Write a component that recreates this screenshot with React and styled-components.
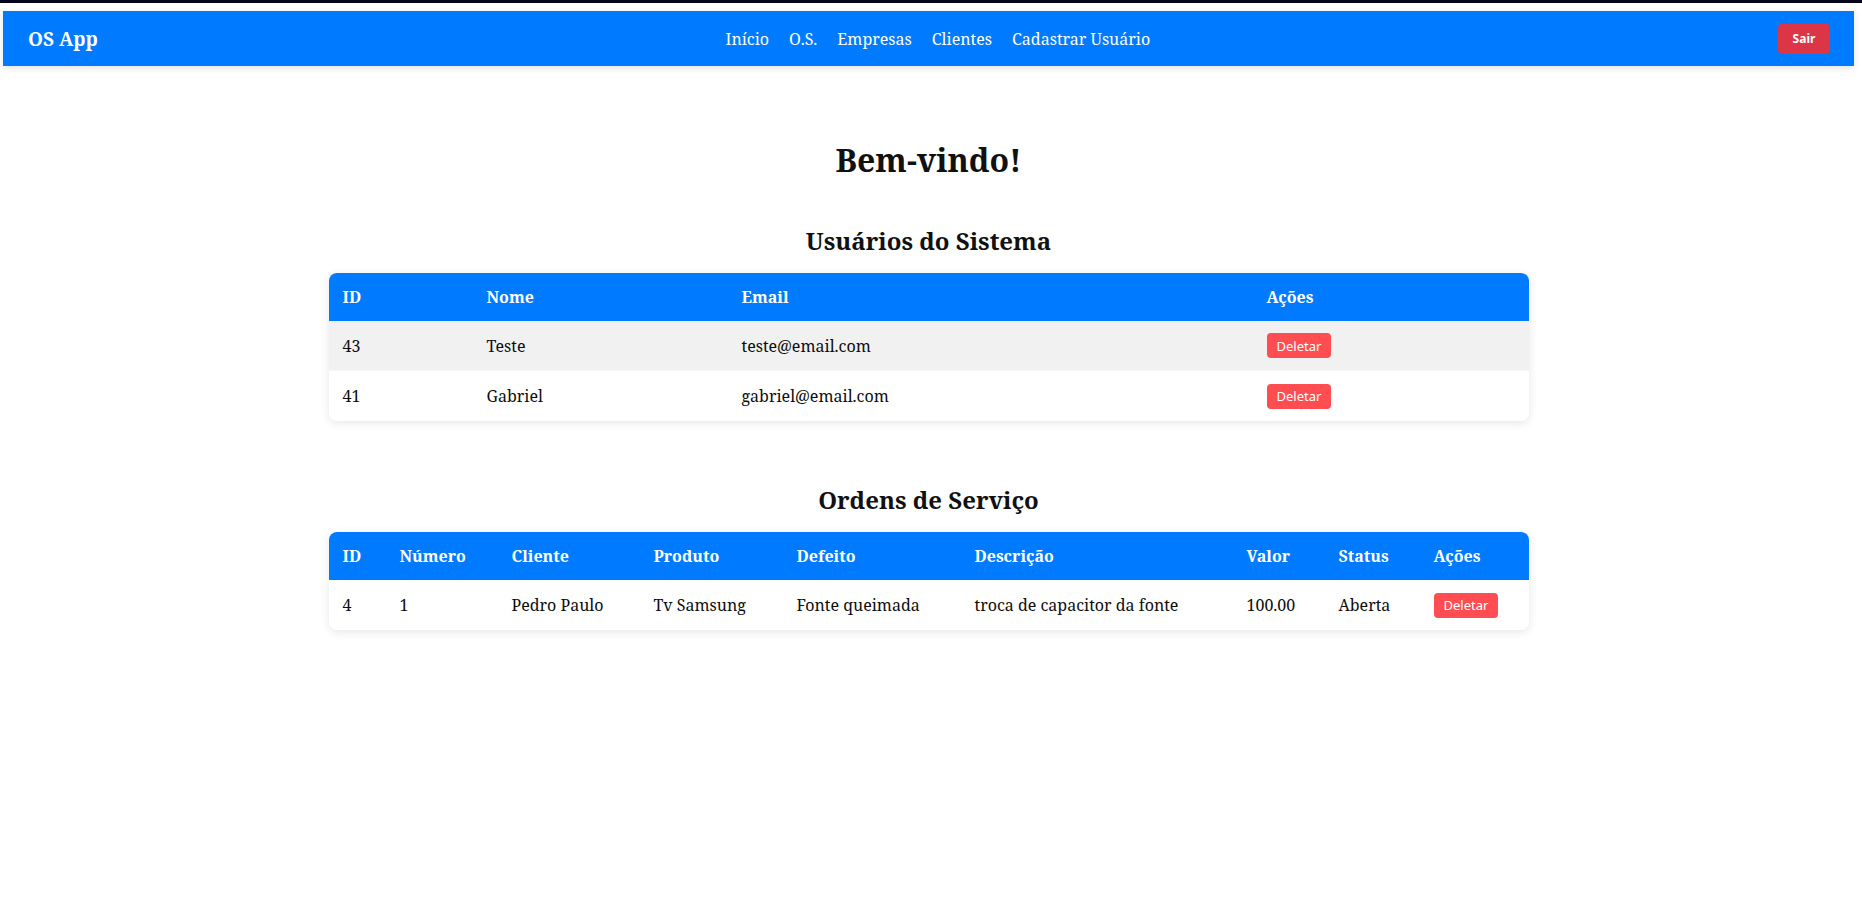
import React from 'react';
import styled, { createGlobalStyle } from 'styled-components';

const GlobalStyle = createGlobalStyle`
  html, body {
    margin: 0;
    padding: 0;
    background: #fff;
  }
  body {
    font-family: "Noto Serif", "DejaVu Serif", serif;
    color: #111;
  }
`;

const TopStrip = styled.div`
  height: 3px;
  background: #05051a;
`;

const Page = styled.div`
  padding: 8px 8px 0 3px;
`;

const NavBar = styled.nav`
  height: 55px;
  background: #007bff;
  display: flex;
  align-items: center;
  justify-content: space-between;
  padding: 0 24px 0 25px;
  box-shadow: 0 2px 6px rgba(0, 0, 0, 0.12);
`;

const Brand = styled.span`
  color: #fff;
  font-size: 19px;
  font-weight: bold;
`;

const NavLinks = styled.div`
  display: flex;
  gap: 20px;
`;

const NavLink = styled.a`
  color: #fff;
  font-size: 16px;
  text-decoration: none;
`;

const LogoutButton = styled.button`
  background: #dc3545;
  color: #fff;
  border: none;
  border-radius: 4px;
  width: 52px;
  height: 30px;
  font-family: "Noto Sans", "Open Sans", sans-serif;
  font-size: 12px;
  font-weight: bold;
`;

const Main = styled.main`
  width: 1200px;
  margin: 0 auto;
  padding-top: 72px;
  text-align: center;
`;

const Title = styled.h1`
  font-size: 32px;
  margin: 0 0 43px;
`;

const Section = styled.section`
  margin-bottom: 62px;
`;

const SectionTitle = styled.h2`
  font-size: 24px;
  margin: 0 0 16px;
`;

const Table = styled.table`
  width: 100%;
  border-collapse: separate;
  border-spacing: 0;
  table-layout: fixed;
  text-align: left;
  border-radius: 8px;
  overflow: hidden;
  box-shadow: 0 2px 10px rgba(0, 0, 0, 0.1);
`;

const HeadRow = styled.tr`
  height: 48px;
`;

const Th = styled.th`
  background: #007bff;
  color: #fff;
  font-size: 16px;
  font-weight: bold;
  padding: 0 12px 0 14px;
  vertical-align: middle;
`;

const Row = styled.tr`
  height: 50px;
  background: ${p => (p.$shaded ? '#f1f1f1' : '#fff')};
`;

const Td = styled.td`
  font-size: 16px;
  color: #0d0d0d;
  padding: 0 12px 0 14px;
  vertical-align: middle;
  border-bottom: ${p => (p.$last ? 'none' : '1px solid #f4f4f4')};
`;

const DeleteButton = styled.button`
  display: block;
  background: #ff4d52;
  color: #fff;
  border: none;
  border-radius: 4px;
  height: 25px;
  padding: 0 10px;
  font-family: "Noto Sans", "Open Sans", sans-serif;
  font-size: 13px;
`;

const users = [
  { id: 43, nome: 'Teste', email: 'teste@email.com' },
  { id: 41, nome: 'Gabriel', email: 'gabriel@email.com' },
];

const ordens = [
  {
    id: 4,
    numero: 1,
    cliente: 'Pedro Paulo',
    produto: 'Tv Samsung',
    defeito: 'Fonte queimada',
    descricao: 'troca de capacitor da fonte',
    valor: '100.00',
    status: 'Aberta',
  },
];

const userCols = [['ID', 144], ['Nome', 255], ['Email', 525], ['Ações', 276]];
const osCols = [
  ['ID', 57], ['Número', 112], ['Cliente', 142], ['Produto', 143], ['Defeito', 178],
  ['Descrição', 272], ['Valor', 92], ['Status', 95], ['Ações', 109],
];

function Head({ cols }) {
  return (
    <>
      <colgroup>
        {cols.map(([name, w]) => <col key={name} style={{ width: w }} />)}
      </colgroup>
      <thead>
        <HeadRow>{cols.map(([name]) => <Th key={name}>{name}</Th>)}</HeadRow>
      </thead>
    </>
  );
}

export default function App() {
  return (
    <>
      <GlobalStyle />
      <TopStrip />
      <Page>
        <NavBar>
          <Brand>OS App</Brand>
          <NavLinks>
            <NavLink href="#">Início</NavLink>
            <NavLink href="#">O.S.</NavLink>
            <NavLink href="#">Empresas</NavLink>
            <NavLink href="#">Clientes</NavLink>
            <NavLink href="#">Cadastrar Usuário</NavLink>
          </NavLinks>
          <LogoutButton>Sair</LogoutButton>
        </NavBar>

        <Main>
          <Title>Bem-vindo!</Title>

          <Section>
            <SectionTitle>Usuários do Sistema</SectionTitle>
            <Table>
              <Head cols={userCols} />
              <tbody>
                {users.map((u, i) => (
                  <Row key={u.id} $shaded={i === 0}>
                    <Td $last={i === users.length - 1}>{u.id}</Td>
                    <Td $last={i === users.length - 1}>{u.nome}</Td>
                    <Td $last={i === users.length - 1}>{u.email}</Td>
                    <Td $last={i === users.length - 1}><DeleteButton>Deletar</DeleteButton></Td>
                  </Row>
                ))}
              </tbody>
            </Table>
          </Section>

          <Section>
            <SectionTitle>Ordens de Serviço</SectionTitle>
            <Table>
              <Head cols={osCols} />
              <tbody>
                {ordens.map(o => (
                  <Row key={o.id}>
                    <Td $last>{o.id}</Td>
                    <Td $last>{o.numero}</Td>
                    <Td $last>{o.cliente}</Td>
                    <Td $last>{o.produto}</Td>
                    <Td $last>{o.defeito}</Td>
                    <Td $last>{o.descricao}</Td>
                    <Td $last>{o.valor}</Td>
                    <Td $last>{o.status}</Td>
                    <Td $last><DeleteButton>Deletar</DeleteButton></Td>
                  </Row>
                ))}
              </tbody>
            </Table>
          </Section>
        </Main>
      </Page>
    </>
  );
}
